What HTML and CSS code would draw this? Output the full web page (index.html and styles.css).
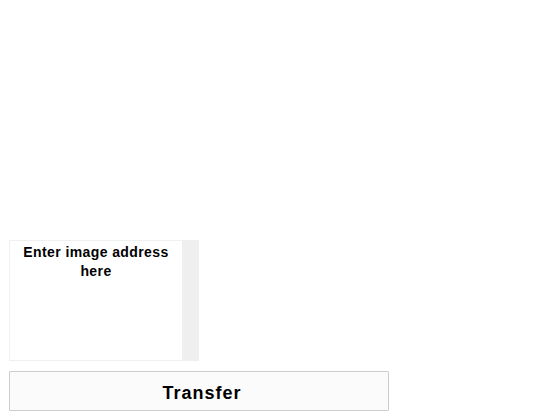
FILE: index.html
```html
<!DOCTYPE html>
<html lang="en">
<head>
<meta charset="utf-8">
<title>Transfer</title>
<link rel="stylesheet" href="styles.css">
</head>
<body>
<main class="page">
  <div class="field">
    <div class="field-text">Enter image address here</div>
    <div class="field-scroll"></div>
  </div>
  <button class="transfer" type="button">Transfer</button>
</main>
</body>
</html>
```
FILE: styles.css
```css
html, body {
  margin: 0;
  padding: 0;
  background: #ffffff;
}

.page {
  display: flex;
  flex-direction: column;
  align-items: flex-start;
  gap: 10px;
  padding: 240px 0 0 9px;
  font-family: "Liberation Sans", Arial, sans-serif;
}

.field {
  display: flex;
  width: 190px;
  height: 121px;
  box-sizing: border-box;
}

.field-text {
  flex: 1;
  box-sizing: border-box;
  border: 1px solid #f0f0f0;
  border-right: none;
  padding: 2px 4px 0;
  text-align: center;
  font-weight: bold;
  font-size: 14px;
  line-height: 19px;
  letter-spacing: 0.4px;
  color: #000;
}

.field-scroll {
  width: 17px;
  background: #efefef;
}

.transfer {
  width: 380px;
  height: 40px;
  box-sizing: border-box;
  margin: 0;
  border: 1px solid #cccccc;
  border-radius: 1px;
  background: #fbfbfb;
  font-family: "Liberation Sans", Arial, sans-serif;
  font-weight: bold;
  font-size: 18px;
  letter-spacing: 1px;
  color: #000;
  padding: 4px 0 0 6px;
}
```
